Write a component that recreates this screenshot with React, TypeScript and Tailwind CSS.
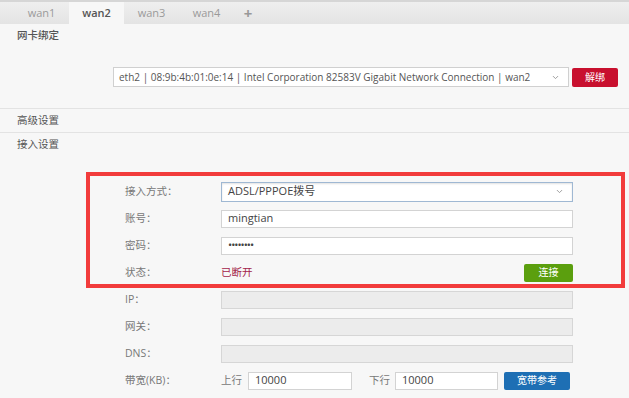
import React from 'react';
import { ChevronDown } from 'lucide-react';

const tabs = ['wan1', 'wan2', 'wan3', 'wan4'];

function Row({ label, children }: { label: string; children?: React.ReactNode }) {
  return (
    <div className="flex h-[27px] items-center">
      <div className="w-[96px] pl-[125px] box-content text-[10.5px] text-[#777] whitespace-nowrap">{label}</div>
      <div className="flex w-[352px] items-center">{children}</div>
    </div>
  );
}

export default function App() {
  return (
    <div
      className="relative h-[398px] w-[629px] overflow-hidden bg-[#f7f7f7] text-[#555]"
      style={{ fontFamily: '"Open Sans", "Noto Sans CJK SC", sans-serif' }}
    >
      {/* tab bar */}
      <div className="flex h-[24px] border-t-2 border-[#d6d6d6] bg-gradient-to-b from-[#efefef] to-[#e4e4e4] pl-[14px]">
        {tabs.map((t) => (
          <div
            key={t}
            className={
              t === 'wan2'
                ? 'flex w-[55px] items-center justify-center bg-[#f7f7f7] text-[11px] font-semibold text-[#555]'
                : 'flex w-[55px] items-center justify-center text-[11px] text-[#9a9a9a]'
            }
          >
            {t}
          </div>
        ))}
        <div className="flex w-[28px] items-center justify-center text-[15px] font-bold text-[#999]">+</div>
      </div>

      {/* 网卡绑定 */}
      <div className="flex h-[24px] items-center pl-[17px] text-[10.5px] font-medium text-[#555]">网卡绑定</div>
      <div className="flex h-[61px] items-start justify-end gap-[3px] border-b border-[#e3e3e3] pr-[11px] pt-[19px]">
        <div className="flex h-[20px] w-[456px] items-center justify-between border border-[#d0d0d0] bg-white pl-[5px] pr-[8px] text-[10px] text-[#555]">
          <span className="whitespace-nowrap">eth2 | 08:9b:4b:01:0e:14 | Intel Corporation 82583V Gigabit Network Connection | wan2</span>
          <ChevronDown size={9} strokeWidth={2.5} className="text-[#999]" />
        </div>
        <button className="mt-[1px] h-[19px] w-[46px] rounded-[2px] bg-[#c8102e] text-[10px] text-white">解绑</button>
      </div>

      <div className="flex h-[24px] items-center border-b border-[#e3e3e3] pl-[17px] text-[10.5px] text-[#555]">高级设置</div>
      <div className="flex h-[24px] items-center pl-[17px] text-[10.5px] text-[#555]">接入设置</div>

      {/* form */}
      <div className="pt-[21px]">
        <Row label="接入方式：">
          <div className="flex h-[20px] w-full items-center justify-between border border-[#9fb8d3] bg-white pl-[6px] pr-[8px] text-[11px] text-[#444] shadow-[inset_0_1px_2px_rgba(0,0,0,0.12)]">
            <span>ADSL/PPPOE拨号</span>
            <ChevronDown size={9} strokeWidth={2.5} className="text-[#999]" />
          </div>
        </Row>
        <Row label="账号：">
          <div className="flex h-[18px] w-full items-center border border-[#d3d3d3] bg-white pl-[6px] text-[11px] text-[#444]">mingtian</div>
        </Row>
        <Row label="密码：">
          <div className="flex h-[18px] w-full items-center border border-[#d3d3d3] bg-white pl-[6px] text-[11px] tracking-[-1px] text-[#444]">••••••••</div>
        </Row>
        <Row label="状态：">
          <div className="flex w-full items-center justify-between">
            <span className="text-[10.5px] text-[#a3234a]">已断开</span>
            <button className="h-[18px] w-[49px] rounded-[2px] bg-[#5b9f0e] text-[10px] text-white">连接</button>
          </div>
        </Row>
        <Row label="IP：">
          <div className="h-[18px] w-full border border-[#d6d6d6] bg-[#ececec]" />
        </Row>
        <Row label="网关：">
          <div className="h-[18px] w-full border border-[#d6d6d6] bg-[#ececec]" />
        </Row>
        <Row label="DNS：">
          <div className="h-[18px] w-full border border-[#d6d6d6] bg-[#ececec]" />
        </Row>
        <Row label="带宽(KB)：">
          <div className="flex w-full items-center text-[10.5px] text-[#777]">
            <span className="w-[27px]">上行</span>
            <div className="flex h-[18px] w-[104px] items-center border border-[#d3d3d3] bg-white pl-[6px] text-[11px] text-[#444]">10000</div>
            <span className="ml-[17px] w-[26px]">下行</span>
            <div className="flex h-[18px] w-[103px] items-center border border-[#d3d3d3] bg-white pl-[6px] text-[11px] text-[#444]">10000</div>
            <button className="ml-[6px] h-[18px] w-[66px] rounded-[2px] bg-[#1e6fb4] text-[10px] text-white">宽带参考</button>
          </div>
        </Row>
      </div>

      {/* red annotation box */}
      <div className="pointer-events-none absolute left-[86px] top-[172px] h-[116px] w-[539px] border-[4px] border-[#f23c3c]" />
    </div>
  );
}
